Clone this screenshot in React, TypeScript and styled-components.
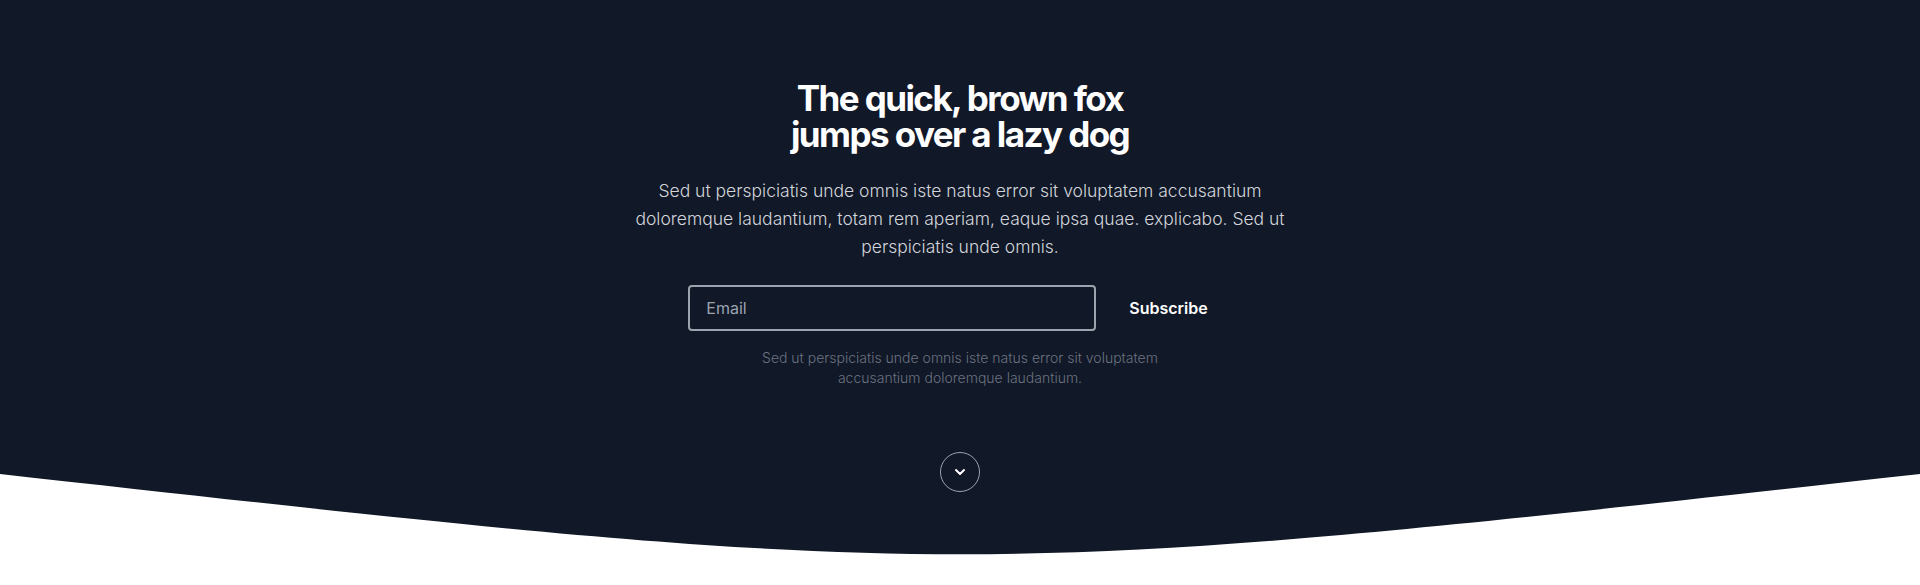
import React from "react";
import styled, { createGlobalStyle } from "styled-components";

const GlobalStyle = createGlobalStyle`
  html, body {
    margin: 0;
    padding: 0;
    background: #ffffff;
  }
  body {
    font-family: Inter, "Noto Sans", "Liberation Sans", sans-serif;
    -webkit-font-smoothing: antialiased;
  }
  * { box-sizing: border-box; }
`;

const Hero = styled.section`
  position: relative;
  height: 585px;
  background: #111827;
  overflow: hidden;
`;

const Content = styled.div`
  display: flex;
  flex-direction: column;
  align-items: center;
  padding-top: 80px;
  text-align: center;
`;

const Title = styled.h1`
  margin: 0;
  font-size: 35px;
  line-height: 36px;
  font-weight: 700;
  letter-spacing: -0.045em;
  color: #ffffff;
`;

const TitleLine = styled.span`
  display: block;
`;

const Lead = styled.p`
  margin: 25px 0 0;
  max-width: 672px;
  font-size: 17.5px;
  line-height: 28px;
  font-weight: 300;
  color: #d1d5db;
`;

const Form = styled.form`
  display: flex;
  align-items: center;
  margin-top: 24px;
`;

const EmailInput = styled.input`
  width: 408px;
  height: 46px;
  padding: 0 16px;
  border: 2px solid #9ca3af;
  border-radius: 4px;
  background: transparent;
  font-family: inherit;
  font-size: 16px;
  color: #ffffff;
  outline: none;
  &::placeholder {
    color: #9ca3af;
  }
`;

const SubscribeButton = styled.button`
  margin-left: 17px;
  padding: 0 24px 0 16px;
  height: 46px;
  border: none;
  background: transparent;
  font-family: inherit;
  font-size: 16px;
  font-weight: 600;
  color: #ffffff;
  cursor: pointer;
`;

const Note = styled.p`
  margin: 17px 0 0;
  max-width: 448px;
  font-size: 14px;
  line-height: 20px;
  font-weight: 300;
  color: #6b7280;
`;

const ScrollButton = styled.button`
  margin-top: 64px;
  width: 40px;
  height: 40px;
  padding: 0;
  border: 1px solid #9ca3af;
  border-radius: 50%;
  background: transparent;
  display: flex;
  align-items: center;
  justify-content: center;
  cursor: pointer;
  position: relative;
  z-index: 1;
`;

const Curve = styled.svg`
  position: absolute;
  left: 0;
  bottom: 0;
  width: 100%;
  height: 111px;
  display: block;
`;

export default function App() {
  return (
    <>
      <GlobalStyle />
      <Hero>
        <Content>
          <Title>
            <TitleLine>The quick, brown fox</TitleLine>
            <TitleLine>jumps over a lazy dog</TitleLine>
          </Title>
          <Lead>
            Sed ut perspiciatis unde omnis iste natus error sit voluptatem accusantium
            doloremque laudantium, totam rem aperiam, eaque ipsa quae. explicabo. Sed ut
            perspiciatis unde omnis.
          </Lead>
          <Form onSubmit={(e) => e.preventDefault()}>
            <EmailInput type="email" placeholder="Email" />
            <SubscribeButton type="submit">Subscribe</SubscribeButton>
          </Form>
          <Note>
            Sed ut perspiciatis unde omnis iste natus error sit voluptatem accusantium
            doloremque laudantium.
          </Note>
          <ScrollButton aria-label="Scroll down">
            <svg width="12" height="8" viewBox="0 0 12 8" fill="none">
              <path
                d="M2 2l4 4 4-4"
                stroke="#ffffff"
                strokeWidth="2"
                strokeLinecap="round"
                strokeLinejoin="round"
              />
            </svg>
          </ScrollButton>
        </Content>
        <Curve viewBox="0 0 1920 111" preserveAspectRatio="none" aria-hidden="true">
          <path d="M0 0 C960 107 960 107 1920 0 V111 H0 Z" fill="#ffffff" />
        </Curve>
      </Hero>
    </>
  );
}
